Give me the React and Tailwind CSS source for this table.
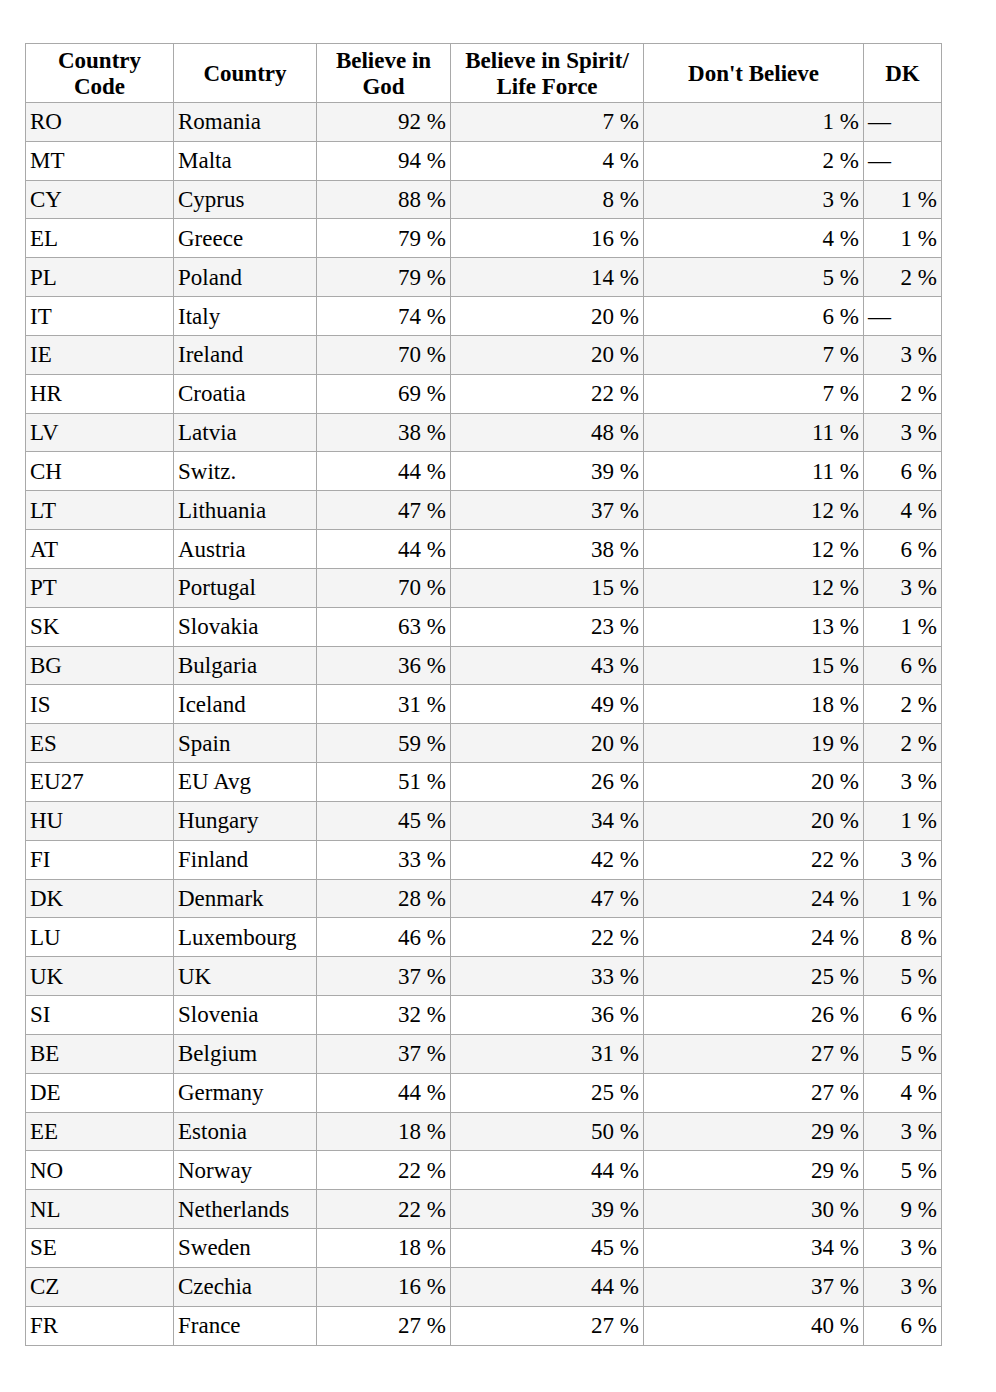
const rows = [
  ['RO', 'Romania', '92 %', '7 %', '1 %', '—'],
  ['MT', 'Malta', '94 %', '4 %', '2 %', '—'],
  ['CY', 'Cyprus', '88 %', '8 %', '3 %', '1 %'],
  ['EL', 'Greece', '79 %', '16 %', '4 %', '1 %'],
  ['PL', 'Poland', '79 %', '14 %', '5 %', '2 %'],
  ['IT', 'Italy', '74 %', '20 %', '6 %', '—'],
  ['IE', 'Ireland', '70 %', '20 %', '7 %', '3 %'],
  ['HR', 'Croatia', '69 %', '22 %', '7 %', '2 %'],
  ['LV', 'Latvia', '38 %', '48 %', '11 %', '3 %'],
  ['CH', 'Switz.', '44 %', '39 %', '11 %', '6 %'],
  ['LT', 'Lithuania', '47 %', '37 %', '12 %', '4 %'],
  ['AT', 'Austria', '44 %', '38 %', '12 %', '6 %'],
  ['PT', 'Portugal', '70 %', '15 %', '12 %', '3 %'],
  ['SK', 'Slovakia', '63 %', '23 %', '13 %', '1 %'],
  ['BG', 'Bulgaria', '36 %', '43 %', '15 %', '6 %'],
  ['IS', 'Iceland', '31 %', '49 %', '18 %', '2 %'],
  ['ES', 'Spain', '59 %', '20 %', '19 %', '2 %'],
  ['EU27', 'EU Avg', '51 %', '26 %', '20 %', '3 %'],
  ['HU', 'Hungary', '45 %', '34 %', '20 %', '1 %'],
  ['FI', 'Finland', '33 %', '42 %', '22 %', '3 %'],
  ['DK', 'Denmark', '28 %', '47 %', '24 %', '1 %'],
  ['LU', 'Luxembourg', '46 %', '22 %', '24 %', '8 %'],
  ['UK', 'UK', '37 %', '33 %', '25 %', '5 %'],
  ['SI', 'Slovenia', '32 %', '36 %', '26 %', '6 %'],
  ['BE', 'Belgium', '37 %', '31 %', '27 %', '5 %'],
  ['DE', 'Germany', '44 %', '25 %', '27 %', '4 %'],
  ['EE', 'Estonia', '18 %', '50 %', '29 %', '3 %'],
  ['NO', 'Norway', '22 %', '44 %', '29 %', '5 %'],
  ['NL', 'Netherlands', '22 %', '39 %', '30 %', '9 %'],
  ['SE', 'Sweden', '18 %', '45 %', '34 %', '3 %'],
  ['CZ', 'Czechia', '16 %', '44 %', '37 %', '3 %'],
  ['FR', 'France', '27 %', '27 %', '40 %', '6 %'],
]

const th = 'border border-[#a9a9a9] px-1 pt-[4px] pb-[2px] leading-[26px] font-bold text-center align-middle'
const td = 'border border-[#a9a9a9] px-1 pt-[1px] pb-0 h-[38.84px] leading-[26px] align-middle'

export default function App() {
  return (
    <div className="min-h-[1392px] bg-white pt-[43px] pl-[25px] text-black text-[23px] font-['Liberation_Serif','Times_New_Roman',serif]">
      <table className="border-collapse table-fixed w-[916px]">
        <colgroup>
          <col className="w-[148px]" />
          <col className="w-[143px]" />
          <col className="w-[134px]" />
          <col className="w-[193px]" />
          <col className="w-[220px]" />
          <col className="w-[78px]" />
        </colgroup>
        <thead>
          <tr>
            <th className={th}>Country<br />Code</th>
            <th className={th}>Country</th>
            <th className={th}>Believe in<br />God</th>
            <th className={th}>Believe in Spirit/<br />Life Force</th>
            <th className={th}>Don't Believe</th>
            <th className={th}>DK</th>
          </tr>
        </thead>
        <tbody>
          {rows.map((r, i) => (
            <tr key={r[0]} className={i % 2 === 0 ? 'bg-[#f4f4f4]' : 'bg-white'}>
              <td className={td}>{r[0]}</td>
              <td className={td}>{r[1]}</td>
              <td className={td + ' text-right'}>{r[2]}</td>
              <td className={td + ' text-right'}>{r[3]}</td>
              <td className={td + ' text-right'}>{r[4]}</td>
              <td className={td + (r[5] === '—' ? ' text-left' : ' text-right')}>{r[5]}</td>
            </tr>
          ))}
        </tbody>
      </table>
    </div>
  )
}
